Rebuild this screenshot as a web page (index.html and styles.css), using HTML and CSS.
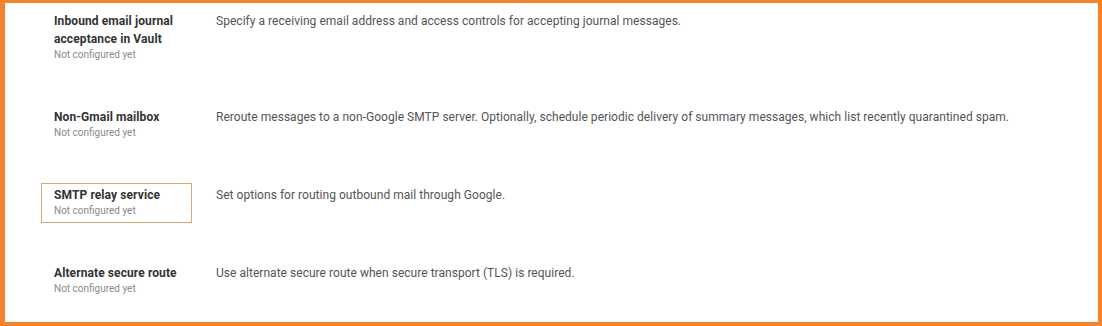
FILE: index.html
```html
<!DOCTYPE html>
<html>
<head>
<meta charset="utf-8">
<link rel="stylesheet" href="styles.css">
</head>
<body>
<div class="frame">
  <div class="row">
    <div class="label">
      <div class="title">Inbound email journal acceptance in Vault</div>
      <div class="status">Not configured yet</div>
    </div>
    <div class="desc">Specify a receiving email address and access controls for accepting journal messages.</div>
  </div>
  <div class="row">
    <div class="label">
      <div class="title">Non-Gmail mailbox</div>
      <div class="status">Not configured yet</div>
    </div>
    <div class="desc">Reroute messages to a non-Google SMTP server. Optionally, schedule periodic delivery of summary messages, which list recently quarantined spam.</div>
  </div>
  <div class="row">
    <div class="label highlight">
      <div class="title">SMTP relay service</div>
      <div class="status">Not configured yet</div>
    </div>
    <div class="desc">Set options for routing outbound mail through Google.</div>
  </div>
  <div class="row">
    <div class="label">
      <div class="title">Alternate secure route</div>
      <div class="status">Not configured yet</div>
    </div>
    <div class="desc">Use alternate secure route when secure transport (TLS) is required.</div>
  </div>
</div>
</body>
</html>
```
FILE: styles.css
```css
html, body {
  margin: 0;
  padding: 0;
  background: #ffffff;
}
body {
  font-family: Roboto, "Liberation Sans", Arial, sans-serif;
  width: 1102px;
  height: 326px;
  overflow: hidden;
}
.frame {
  box-sizing: border-box;
  width: 1102px;
  height: 326px;
  border-style: solid;
  border-color: #f4832b;
  border-width: 3px 4px 4px 5px;
  background: #ffffff;
  padding: 6px 0 0 36px;
  display: flex;
  flex-direction: column;
  gap: 38px;
}
.row {
  display: flex;
  align-items: flex-start;
  gap: 24px;
}
.label {
  box-sizing: border-box;
  width: 151px;
  flex: none;
  border: 1px solid transparent;
  padding: 2px 12px 4px;
}
.label.highlight {
  border-color: #d8a873;
}
.title {
  font-size: 12px;
  line-height: 18px;
  font-weight: 700;
  color: #333333;
  letter-spacing: 0.1px;
}
.status {
  font-size: 10px;
  line-height: 14px;
  color: #8a8a8a;
}
.desc {
  font-size: 12px;
  line-height: 18px;
  color: #555555;
  padding-top: 3px;
  letter-spacing: 0.035px;
}
```
